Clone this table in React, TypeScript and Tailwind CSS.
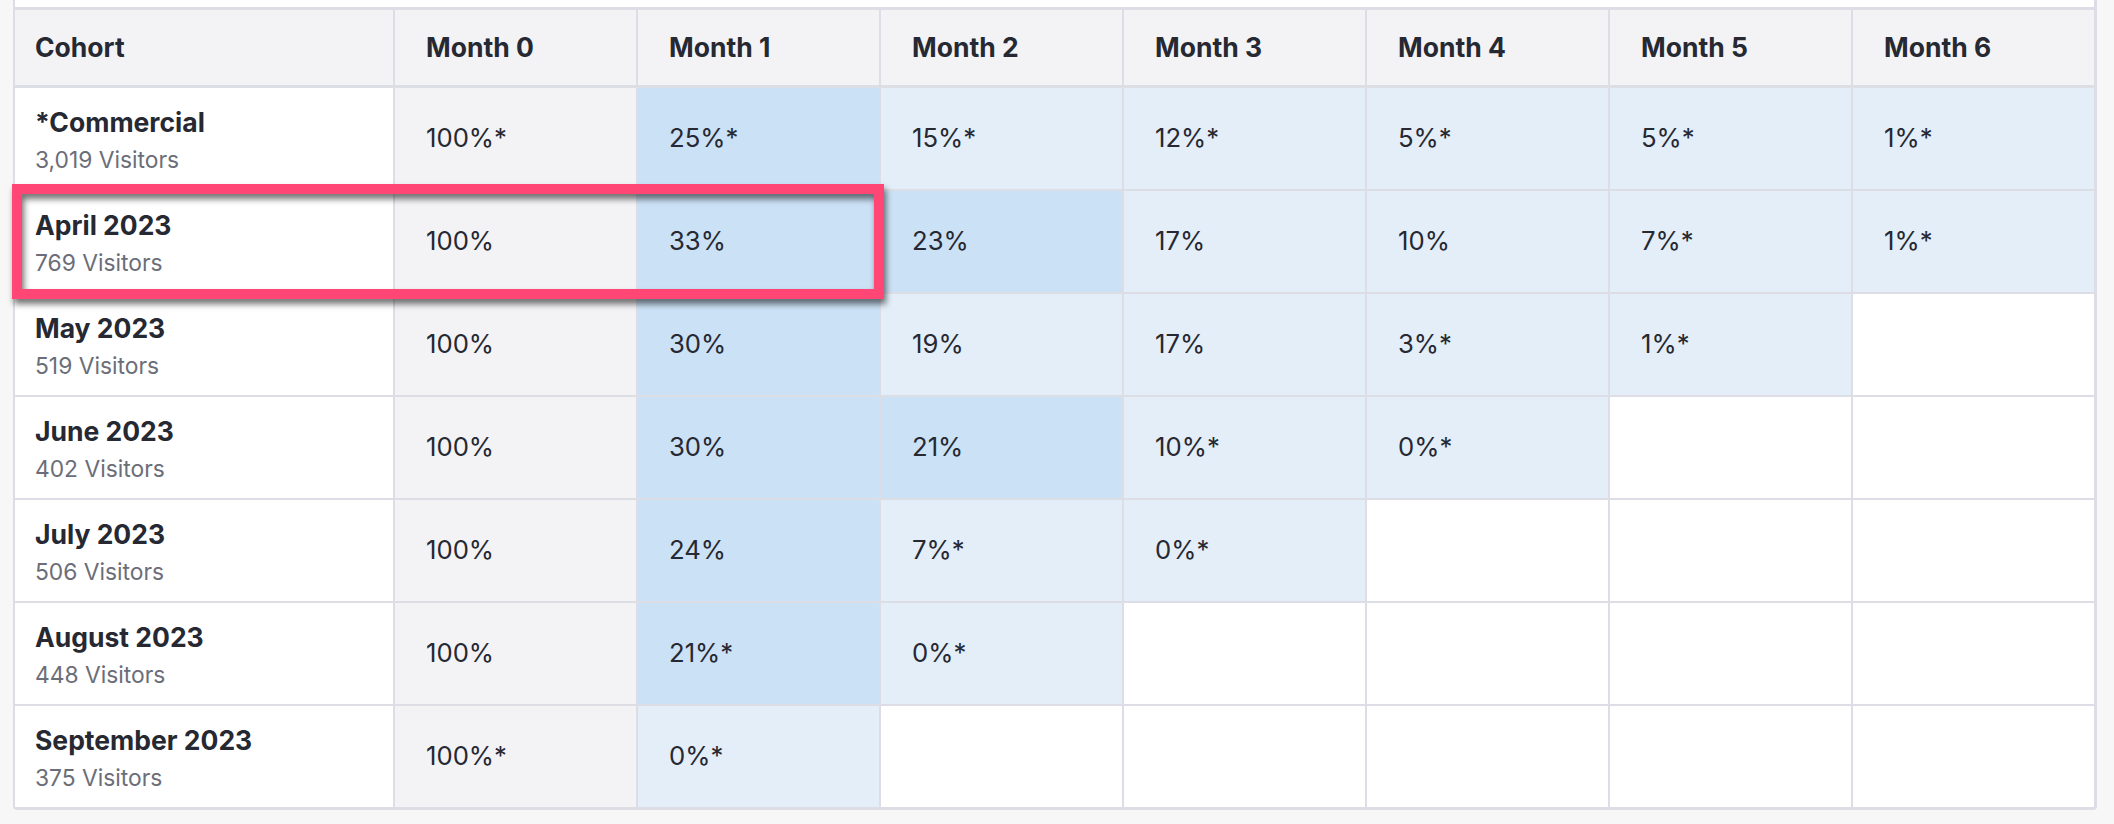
import React from "react";

type Tone = "gray" | "dark" | "light" | "empty";

const D = "dark" as Tone;
const L = "light" as Tone;

const rows: { name: string; visitors: string; cells: [string, Tone][] }[] = [
  {
    name: "*Commercial",
    visitors: "3,019 Visitors",
    cells: [["100%*", "gray"], ["25%*", D], ["15%*", L], ["12%*", L], ["5%*", L], ["5%*", L], ["1%*", L]],
  },
  {
    name: "April 2023",
    visitors: "769 Visitors",
    cells: [["100%", "gray"], ["33%", D], ["23%", D], ["17%", L], ["10%", L], ["7%*", L], ["1%*", L]],
  },
  {
    name: "May 2023",
    visitors: "519 Visitors",
    cells: [["100%", "gray"], ["30%", D], ["19%", L], ["17%", L], ["3%*", L], ["1%*", L], ["", "empty"]],
  },
  {
    name: "June 2023",
    visitors: "402 Visitors",
    cells: [["100%", "gray"], ["30%", D], ["21%", D], ["10%*", L], ["0%*", L], ["", "empty"], ["", "empty"]],
  },
  {
    name: "July 2023",
    visitors: "506 Visitors",
    cells: [["100%", "gray"], ["24%", D], ["7%*", L], ["0%*", L], ["", "empty"], ["", "empty"], ["", "empty"]],
  },
  {
    name: "August 2023",
    visitors: "448 Visitors",
    cells: [["100%", "gray"], ["21%*", D], ["0%*", L], ["", "empty"], ["", "empty"], ["", "empty"], ["", "empty"]],
  },
  {
    name: "September 2023",
    visitors: "375 Visitors",
    cells: [["100%*", "gray"], ["0%*", L], ["", "empty"], ["", "empty"], ["", "empty"], ["", "empty"], ["", "empty"]],
  },
];

const toneClass: Record<Tone, string> = {
  gray: "bg-[#f3f3f6]",
  dark: "bg-[#cbe1f5]",
  light: "bg-[#e3eef9]",
  empty: "bg-white",
};

const months = ["Month 0", "Month 1", "Month 2", "Month 3", "Month 4", "Month 5", "Month 6"];

export default function App() {
  return (
    <div
      className="relative w-[2114px] h-[824px] bg-[#f7f7f7] pl-[13px] pr-[17px] overflow-hidden text-[#262832]"
      style={{ fontFamily: "Inter, 'Noto Sans', sans-serif" }}
    >
      <div className="bg-white border-l-2 border-r-[3px] border-b-[3px] border-[#dcdde5] rounded-b-[4px] pt-[7px]">
        <div className="border-t-[3px] border-[#dcdde5]">
          <div className="grid grid-cols-[378px_repeat(7,minmax(0,1fr))] gap-x-[2px] bg-[#dcdde5] border-b-[3px] border-[#dcdde5]">
            <div className="bg-[#f3f3f6] h-[75px] flex items-center pl-[20px] text-[26.5px] font-bold">
              Cohort
            </div>
            {months.map((m) => (
              <div key={m} className="bg-[#f3f3f6] h-[75px] flex items-center pl-[31px] text-[26.5px] font-bold">
                {m}
              </div>
            ))}
          </div>
          <div className="grid grid-cols-[378px_repeat(7,minmax(0,1fr))] gap-[2px] bg-[#dcdde5]">
            {rows.map((r) => (
              <React.Fragment key={r.name}>
                <div className="bg-white h-[101px] flex flex-col justify-center pl-[20px] pt-[3px]">
                  <div className="text-[26.5px] leading-[31px] font-bold">{r.name}</div>
                  <div className="text-[22.8px] leading-[27px] mt-[8px] text-[#6b6e78]">{r.visitors}</div>
                </div>
                {r.cells.map(([v, t], i) => (
                  <div key={i} className={`${toneClass[t]} h-[101px] flex items-center pl-[31px] text-[25.7px]`}>
                    {v}
                  </div>
                ))}
              </React.Fragment>
            ))}
          </div>
        </div>
      </div>
      <div className="absolute left-[12px] top-[184px] w-[872px] h-[115px] border-[10px] border-[#ff4675] [filter:drop-shadow(2px_5px_3px_rgba(0,0,0,0.55))]" />
    </div>
  );
}
